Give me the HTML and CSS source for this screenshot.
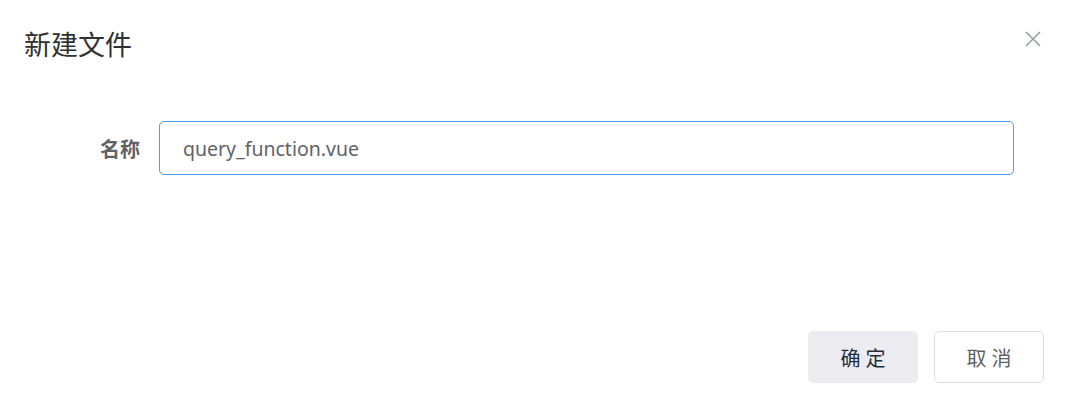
FILE: index.html
```html
<!DOCTYPE html>
<html lang="zh-CN">
<head>
    <meta charset="UTF-8">
    <title>新建文件</title>
    <link rel="stylesheet" href="styles.css">
</head>
<body>
    <div class="dialog">
        <div class="dialog-header">
            <span class="dialog-title">新建文件</span>
            <button class="dialog-close" type="button" aria-label="关闭">
                <svg width="16" height="16" viewBox="0 0 16 16">
                    <path d="M1 1 L15 15 M15 1 L1 15" stroke="#909399" stroke-width="1.4" fill="none"/>
                </svg>
            </button>
        </div>

        <form class="dialog-body">
            <div class="form-item">
                <label class="form-label" for="name">名称</label>
                <input class="form-input" id="name" type="text" value="query_function.vue">
            </div>
        </form>

        <div class="dialog-footer">
            <button class="btn btn-primary" type="button">确 定</button>
            <button class="btn btn-default" type="button">取 消</button>
        </div>
    </div>
</body>
</html>
```

FILE: styles.css
```css
* {
    margin: 0;
    padding: 0;
    box-sizing: border-box;
    font-family: 'Noto Sans', 'Noto Sans CJK SC', sans-serif;
}
body {
    background-color: #ffffff;
    width: 1067px;
    height: 410px;
    overflow: hidden;
}
.dialog {
    display: flex;
    flex-direction: column;
    height: 410px;
}
.dialog-header {
    display: flex;
    justify-content: space-between;
    align-items: center;
    padding: 26px 26px 0 24px;
    height: 64px;
}
.dialog-title {
    font-size: 27px;
    line-height: 32px;
    color: #303133;
}
.dialog-close {
    background: none;
    border: none;
    width: 16px;
    height: 16px;
    margin-top: -12px;
    cursor: pointer;
}
.dialog-body {
    padding: 57px 53px 0 24px;
    flex: 1;
}
.form-item {
    display: flex;
    align-items: center;
}
.form-label {
    width: 135px;
    padding-right: 19px;
    text-align: right;
    font-size: 20px;
    font-weight: 700;
    color: #606266;
}
.form-input {
    flex: 1;
    height: 54px;
    padding: 0 23px;
    font-size: 19.5px;
    color: #606266;
    border: 1px solid #409eff;
    border-radius: 5px;
    outline: none;
}
.dialog-footer {
    display: flex;
    justify-content: flex-end;
    gap: 16px;
    padding: 0 23px 27px 0;
}
.btn {
    width: 110px;
    height: 52px;
    font-size: 20px;
    font-weight: 400;
    border-radius: 5px;
    cursor: pointer;
}
.btn-primary {
    background-color: #ebebf0;
    color: #1f2d3d;
    border: 1px solid #ebebf0;
}
.btn-default {
    background-color: #ffffff;
    color: #606266;
    border: 1px solid #dcdfe6;
}
```
